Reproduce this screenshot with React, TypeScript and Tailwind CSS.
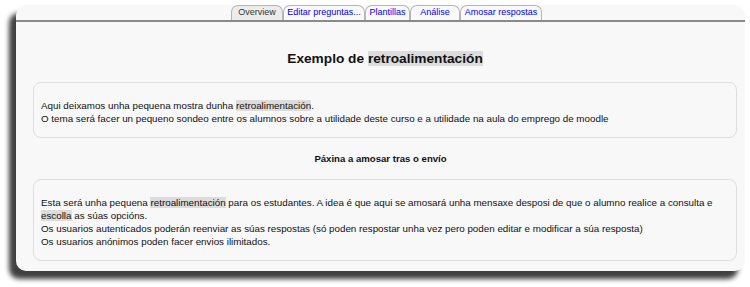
const tabs = [
  { label: "Overview", active: true, w: "w-[52px]" },
  { label: "Editar preguntas...", active: false, w: "w-[82px]" },
  { label: "Plantillas", active: false, w: "w-[45px]" },
  { label: "Análise", active: false, w: "w-[50px]" },
  { label: "Amosar respostas", active: false, w: "w-[82px]" },
];

const Hl = ({ children }: { children: React.ReactNode }) => (
  <span className="bg-[#dcdcdc]">{children}</span>
);

export default function App() {
  return (
    <div className="w-[750px] h-[287px] bg-white overflow-hidden font-['Liberation_Sans',Arial,sans-serif] text-[#111]">
      <div className="ml-[16px] mt-[5px] w-[729px] h-[266px] rounded-[10px] bg-[#f8f8f8] shadow-[-7px_8px_5px_rgba(0,0,0,0.75)] flex flex-col">
        <div className="h-[17px] border-b-2 border-[#8a8a8a] flex justify-center pl-[12px]">
          {tabs.map((t) => (
            <div
              key={t.label}
              className={`${t.w} h-full rounded-t-[7px] border border-b-0 border-[#b5b5b5] flex items-center justify-center text-[9px] ${
                t.active ? "bg-[#ececec] text-[#333]" : "bg-[#f9f9f9] text-[#0000ee]"
              }`}
            >
              {t.label}
            </div>
          ))}
        </div>

        <h2 className="mt-[28px] pl-[9px] text-center text-[13.7px] font-bold leading-[18px]">
          Exemplo de <Hl>retroalimentación</Hl>
        </h2>

        <div className="mt-[14px] ml-[17px] mr-[8px] h-[56px] rounded-[8px] border border-[#dedede] px-[7px] pt-[16px] text-[9.8px] leading-[13px]">
          <p>
            Aqui deixamos unha pequena mostra dunha <Hl>retroalimentación</Hl>.
          </p>
          <p>
            O tema será facer un pequeno sondeo entre os alumnos sobre a utilidade deste curso e a utilidade na aula do emprego de moodle
          </p>
        </div>

        <h3 className="mt-[14px] text-center text-[9.6px] font-bold leading-[13px]">
          Páxina a amosar tras o envío
        </h3>

        <div className="mt-[14px] ml-[17px] mr-[8px] h-[82px] rounded-[8px] border border-[#dedede] px-[7px] pt-[16px] text-[9.8px] leading-[13px]">
          <p>
            Esta será unha pequena <Hl>retroalimentación</Hl> para os estudantes. A idea é que aqui se amosará unha mensaxe desposi de que o alumno realice a consulta e <Hl>escolla</Hl> as súas opcións.
          </p>
          <p>
            Os usuarios autenticados poderán reenviar as súas respostas (só poden respostar unha vez pero poden editar e modificar a súa resposta)
          </p>
          <p>Os usuarios anónimos poden facer envios ilimitados.</p>
        </div>
      </div>
    </div>
  );
}
